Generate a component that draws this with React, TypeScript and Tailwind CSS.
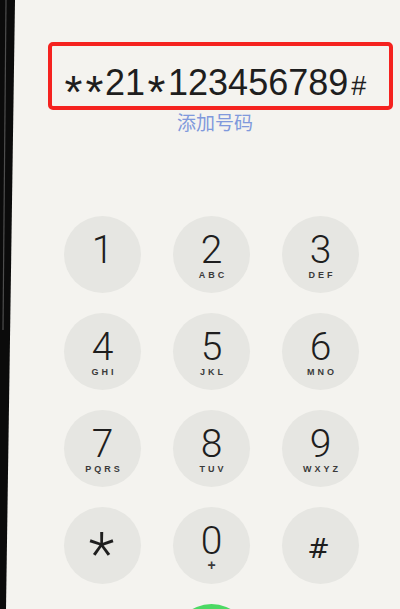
import React from "react";

const keys: { d: string; l?: string; kind?: "star" | "hash" }[] = [
  { d: "1" },
  { d: "2", l: "ABC" },
  { d: "3", l: "DEF" },
  { d: "4", l: "GHI" },
  { d: "5", l: "JKL" },
  { d: "6", l: "MNO" },
  { d: "7", l: "PQRS" },
  { d: "8", l: "TUV" },
  { d: "9", l: "WXYZ" },
  { d: "*", kind: "star" },
  { d: "0", l: "+" },
  { d: "#", kind: "hash" },
];

function Star({ w }: { w: string }) {
  return (
    <span className={"inline-block text-center text-[46px] leading-none translate-y-[13px] " + w}>*</span>
  );
}

export default function App() {
  return (
    <div
      className="w-[400px] h-[609px] overflow-hidden flex bg-[#f4f3ef] text-[#1e1e1e]"
      style={{ fontFamily: '"Liberation Sans", Arial, sans-serif' }}
    >
      <div className="w-[15px] h-full shrink-0">
        <svg width="15" height="609" viewBox="0 0 15 609" className="block">
          <polygon points="0,0 15,0 6,609 0,609" fill="#0b0b0b" />
          <line x1="6" y1="0" x2="3" y2="330" stroke="#6a6a6a" strokeWidth="1.2" opacity="0.7" />
        </svg>
      </div>
      <div className="flex-1 block">
        <div className="mt-[42px] ml-[33px] w-[345px] h-[68px] border-4 border-[#f5221f] rounded-[5px] flex items-center pl-[11px] pt-[6px]">
          <span className="text-[36px] leading-none whitespace-nowrap">
            <Star w="w-[21px]" />
            <Star w="w-[21px]" />
            21
            <Star w="w-[23px]" />
            123456789
            <span className="inline-block ml-[3px] text-[27px] leading-none">#</span>
          </span>
        </div>
        <div
          className="ml-[162px] mt-[1px] text-[19px] leading-[22px] text-[#8099dc]"
          style={{ fontFamily: '"Noto Sans CJK SC", sans-serif' }}
        >
          添加号码
        </div>
        <div className="mt-[83px] ml-[49px] grid grid-cols-[77px_77px_77px] gap-x-[32px] gap-y-[20px]">
          {keys.map((k) => (
            <div
              key={k.d}
              className={
                "w-[77px] h-[77px] rounded-full bg-[#e6e6e2] flex flex-col items-center " +
                (k.kind ? "justify-center" : "pt-[14px]")
              }
            >
              {k.kind === "star" ? (
                <span
                  className="text-[60px] leading-none font-light translate-y-[8px] -translate-x-[1px]"
                  style={{ fontFamily: 'Roboto, "Liberation Sans", sans-serif' }}
                >
                  *
                </span>
              ) : k.kind === "hash" ? (
                <span
                  className="text-[27px] leading-none translate-y-[3px] -translate-x-[2px]"
                  style={{ fontFamily: '"DejaVu Sans", sans-serif' }}
                >
                  #
                </span>
              ) : (
                <>
                  <span
                    className="text-[39px] leading-[40px] font-light"
                    style={{ fontFamily: 'Roboto, "Liberation Sans", sans-serif' }}
                  >
                    {k.d}
                  </span>
                  {k.l && (
                    <span
                      className={
                        "leading-[10px] font-bold text-[#3a3a3a] " +
                        (k.l === "+" ? "text-[14px] -mt-[1px]" : "text-[9px] tracking-[3px] pl-[3px]")
                      }
                    >
                      {k.l}
                    </span>
                  )}
                </>
              )}
            </div>
          ))}
          <div />
          <div className="w-[77px] h-[77px] rounded-full bg-[#4cd964]" />
          <div />
        </div>
      </div>
    </div>
  );
}
